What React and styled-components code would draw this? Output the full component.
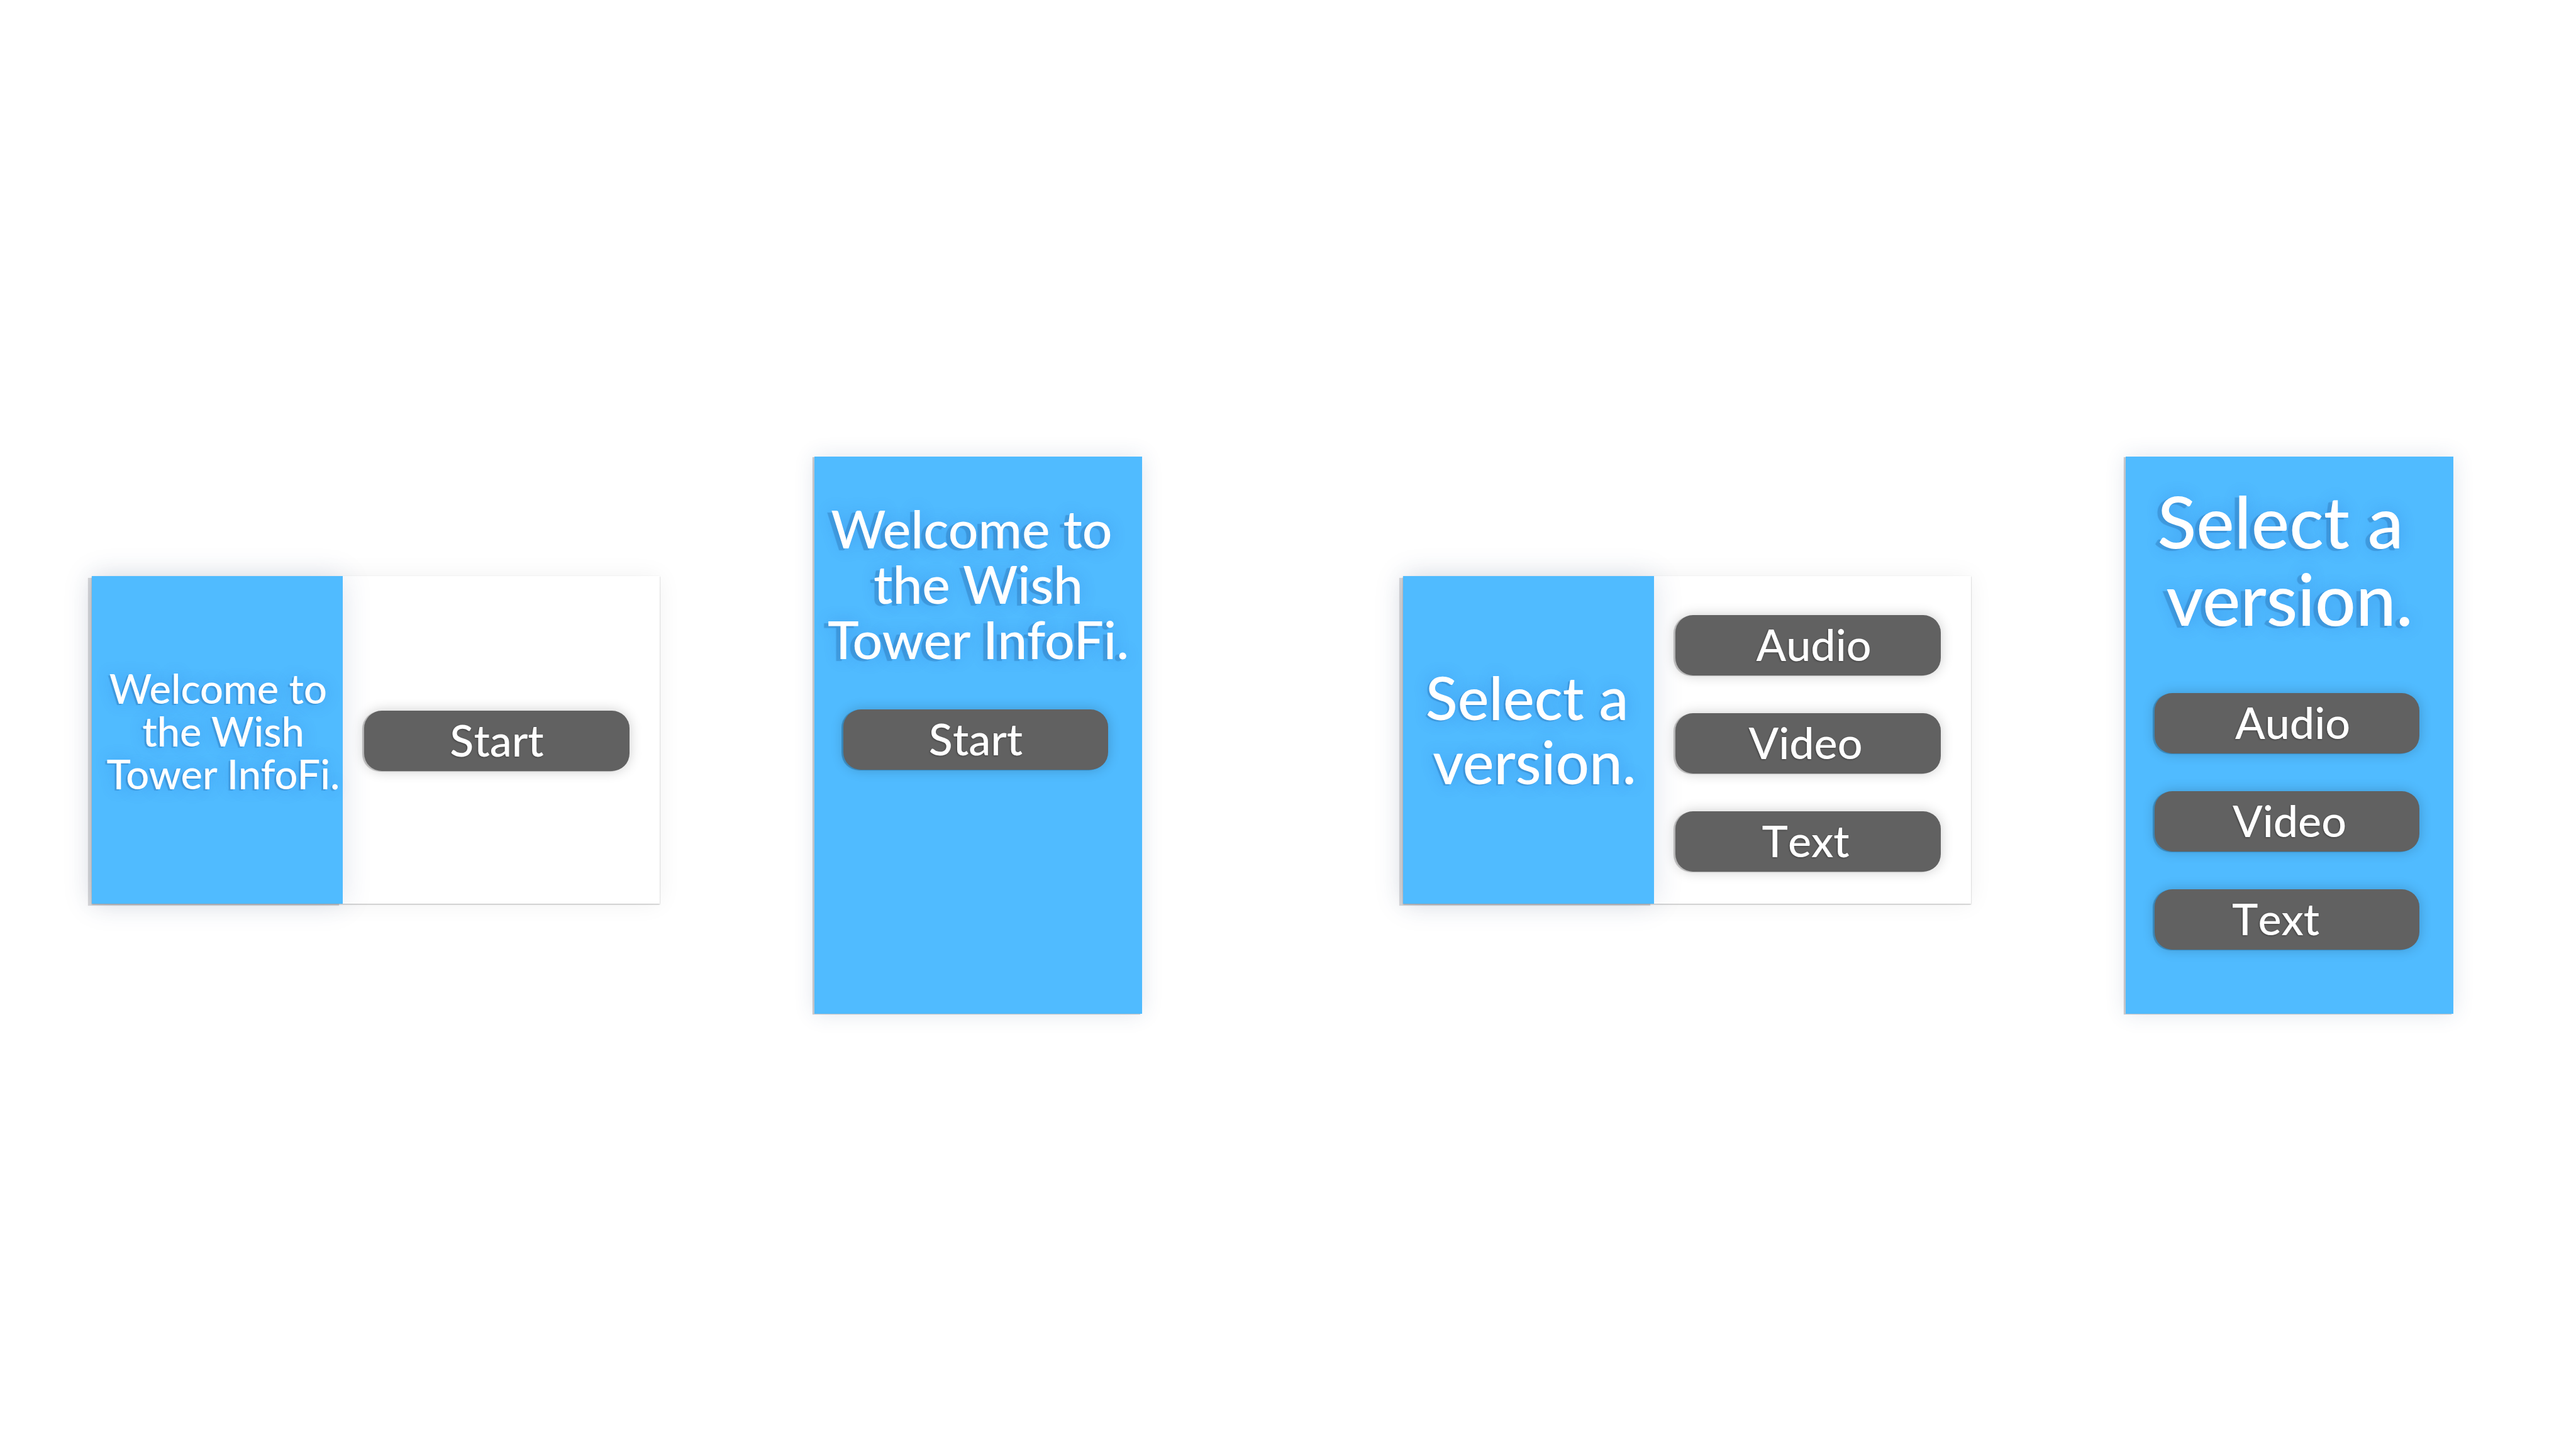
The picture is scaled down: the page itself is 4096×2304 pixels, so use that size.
import React from "react";
import styled, { createGlobalStyle } from "styled-components";

const GlobalStyle = createGlobalStyle`
  *, *::before, *::after { box-sizing: border-box; }
  body { margin: 0; background: #fff; }
`;

const Board = styled.main`
  display: flex;
  align-items: center;
  gap: 415px;
  min-height: 100vh;
  padding: 34px 195px 0 146px;
  font-family: Lato, "Liberation Sans", sans-serif;
  color: #fff;
`;

const ScreenPair = styled.section`
  flex: 1;
  display: grid;
  grid-template-columns: 903fr 521fr;
  align-items: center;
  column-gap: 246px;
`;

const Landscape = styled.article`
  display: grid;
  grid-template-columns: 399fr 504fr;
  aspect-ratio: 903 / 521;
  margin-top: 15px;
  background: #fff;
  box-shadow: 0 1px 2px rgba(0, 0, 0, 0.3), 0 0 36px rgba(0, 0, 0, 0.06);
`;

const TitlePanel = styled.div`
  padding: ${(p) => p.$top}px 0 0 19px;
  background: #50bbff;
  box-shadow: -6px 3px 1px rgba(40, 40, 50, 0.18), 0 0 44px rgba(40, 70, 130, 0.15);
`;

const Actions = styled.div`
  display: flex;
  flex-direction: column;
  gap: 60px;
  padding: ${(p) => p.$top}px 48px 0 34px;
`;

const Portrait = styled.article`
  display: flex;
  flex-direction: column;
  aspect-ratio: 521 / 886;
  padding-top: ${(p) => p.$top}px;
  background: #50bbff;
  box-shadow: -3px 1px 1px rgba(40, 40, 50, 0.24), 0 0 32px rgba(40, 70, 130, 0.14);
`;

const PortraitActions = styled(Actions)`
  padding: ${(p) => p.$top}px 54px 0 46px;
`;

const Title = styled.h1`
  margin: 0;
  font-size: ${(p) => p.$size}px;
  line-height: ${(p) => p.$line}px;
  font-weight: 500;
  text-align: center;
  white-space: pre;
  text-shadow: ${(p) => (p.$raised ? "-7px 3px" : "-3px 2px")} 1px rgba(20, 70, 130, 0.25),
    0 0 24px rgba(30, 90, 200, 0.3);
`;

const Button = styled.button`
  height: 96px;
  border: 0;
  border-radius: 28px;
  padding: 0 ${(p) => p.$end || 0}px 4px ${(p) => p.$start || 0}px;
  background: #616161;
  color: #fff;
  font: 500 70px/92px Lato, "Liberation Sans", sans-serif;
  font-kerning: none;
  text-align: center;
  text-shadow: -1px 1px 3px rgba(0, 0, 0, 0.35);
  box-shadow: -3px 1px 1px rgba(0, 0, 0, 0.22), 0 0 20px rgba(0, 0, 0, 0.2);
  cursor: pointer;
`;

const welcome = "Welcome to \nthe Wish\nTower InfoFi.";
const select = "Select a \nversion.";

export default function App() {
  return (
    <>
      <GlobalStyle />
      <Board>
        <ScreenPair aria-label="Welcome">
          <Landscape>
            <TitlePanel $top={144}>
              <Title $size={65} $line={68}>{welcome}</Title>
            </TitlePanel>
            <Actions $top={214}>
              <Button type="button">Start</Button>
            </Actions>
          </Landscape>
          <Portrait $top={70}>
            <Title $size={84} $line={88} $raised>{welcome}</Title>
            <PortraitActions $top={68}>
              <Button type="button">Start</Button>
            </PortraitActions>
          </Portrait>
        </ScreenPair>
        <ScreenPair aria-label="Select a version">
          <Landscape>
            <TitlePanel $top={142}>
              <Title $size={94} $line={102}>{select}</Title>
            </TitlePanel>
            <Actions $top={62}>
              <Button type="button" $start={18}>Audio</Button>
              <Button type="button" $end={8}>Video</Button>
              <Button type="button" $end={8}>Text</Button>
            </Actions>
          </Landscape>
          <Portrait $top={40}>
            <Title $size={114} $line={123} $raised>{select}</Title>
            <PortraitActions $top={90}>
              <Button type="button" $start={18}>Audio</Button>
              <Button type="button" $start={8}>Video</Button>
              <Button type="button" $end={36}>Text</Button>
            </PortraitActions>
          </Portrait>
        </ScreenPair>
      </Board>
    </>
  );
}
